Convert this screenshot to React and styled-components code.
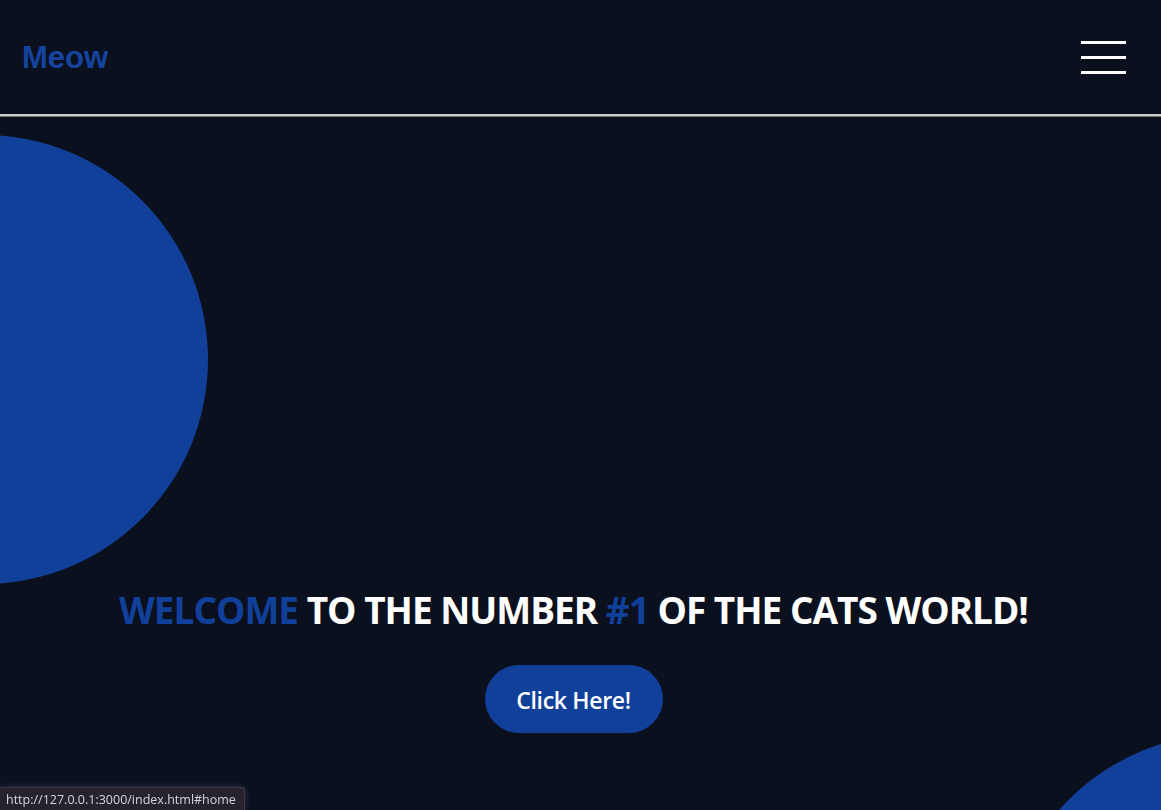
import React from "react";
import styled, { createGlobalStyle } from "styled-components";

const Global = createGlobalStyle`
  html, body { margin: 0; padding: 0; background: #0b101e; }
  body { font-family: "Open Sans", "Noto Sans", sans-serif; overflow: hidden; }
  * { box-sizing: border-box; }
`;

const Page = styled.div`
  width: 100%;
  height: 810px;
  display: flex;
  flex-direction: column;
  background: #0b101e;
`;

const Header = styled.header`
  height: 117px;
  flex: none;
  display: flex;
  align-items: center;
  justify-content: space-between;
  padding: 0 35px 0 22px;
  border-bottom: 3px ridge #c9c9c9;
`;

const Logo = styled.a`
  font-family: "Liberation Sans", Arial, sans-serif;
  font-weight: 700;
  font-size: 31px;
  color: #15449e;
  text-decoration: none;
  margin-top: 1px;
`;

const Burger = styled.button`
  display: flex;
  flex-direction: column;
  gap: 12px;
  background: none;
  border: 0;
  padding: 0;
  cursor: pointer;
`;

const Bar = styled.span`
  display: block;
  width: 45px;
  height: 3px;
  background: #ffffff;
`;

const Hero = styled.section`
  position: relative;
  flex: 1;
  overflow: hidden;
  display: flex;
  flex-direction: column;
  align-items: center;
  justify-content: flex-end;
  padding: 0 14px 77px 0;
`;

const Circle = styled.div`
  position: absolute;
  width: 449px;
  height: 449px;
  border-radius: 50%;
  background: #11409a;
  left: ${(p) => p.$left}px;
  top: ${(p) => p.$top}px;
`;

const Title = styled.h1`
  position: relative;
  margin: 0 0 32px;
  font-size: 37px;
  letter-spacing: -1px;
  line-height: 1.25;
  font-weight: 700;
  color: #ffffff;
  text-align: center;
  white-space: nowrap;
`;

const Accent = styled.span`
  color: #11409a;
`;

const CTA = styled.a`
  position: relative;
  display: inline-flex;
  align-items: center;
  justify-content: center;
  width: 178px;
  height: 68px;
  padding-top: 2px;
  border-radius: 34px;
  background: #11409a;
  color: #ffffff;
  font-size: 23px;
  font-weight: 600;
  letter-spacing: -0.3px;
  text-decoration: none;
`;

const Status = styled.div`
  position: fixed;
  left: 0;
  bottom: 0;
  width: 245px;
  height: 23px;
  padding: 0 6px;
  display: flex;
  align-items: center;
  background: #26232e;
  border: 1px solid #3b3a44;
  border-left: 0;
  border-bottom: 0;
  border-radius: 0 3px 0 0;
  box-shadow: 0 0 6px rgba(120, 120, 140, 0.35);
  color: #d4d4d8;
  font-size: 12.5px;
  white-space: nowrap;
`;

export default function App() {
  return (
    <>
      <Global />
      <Page>
        <Header>
          <Logo href="#home">Meow</Logo>
          <Burger aria-label="menu">
            <Bar />
            <Bar />
            <Bar />
          </Burger>
        </Header>
        <Hero>
          <Circle $left={-241} $top={18} />
          <Circle $left={1003} $top={617} />
          <Title>
            <Accent>WELCOME</Accent> TO THE NUMBER <Accent>#1</Accent> OF THE CATS WORLD!
          </Title>
          <CTA href="#home">Click Here!</CTA>
        </Hero>
      </Page>
      <Status>http://127.0.0.1:3000/index.html#home</Status>
    </>
  );
}
